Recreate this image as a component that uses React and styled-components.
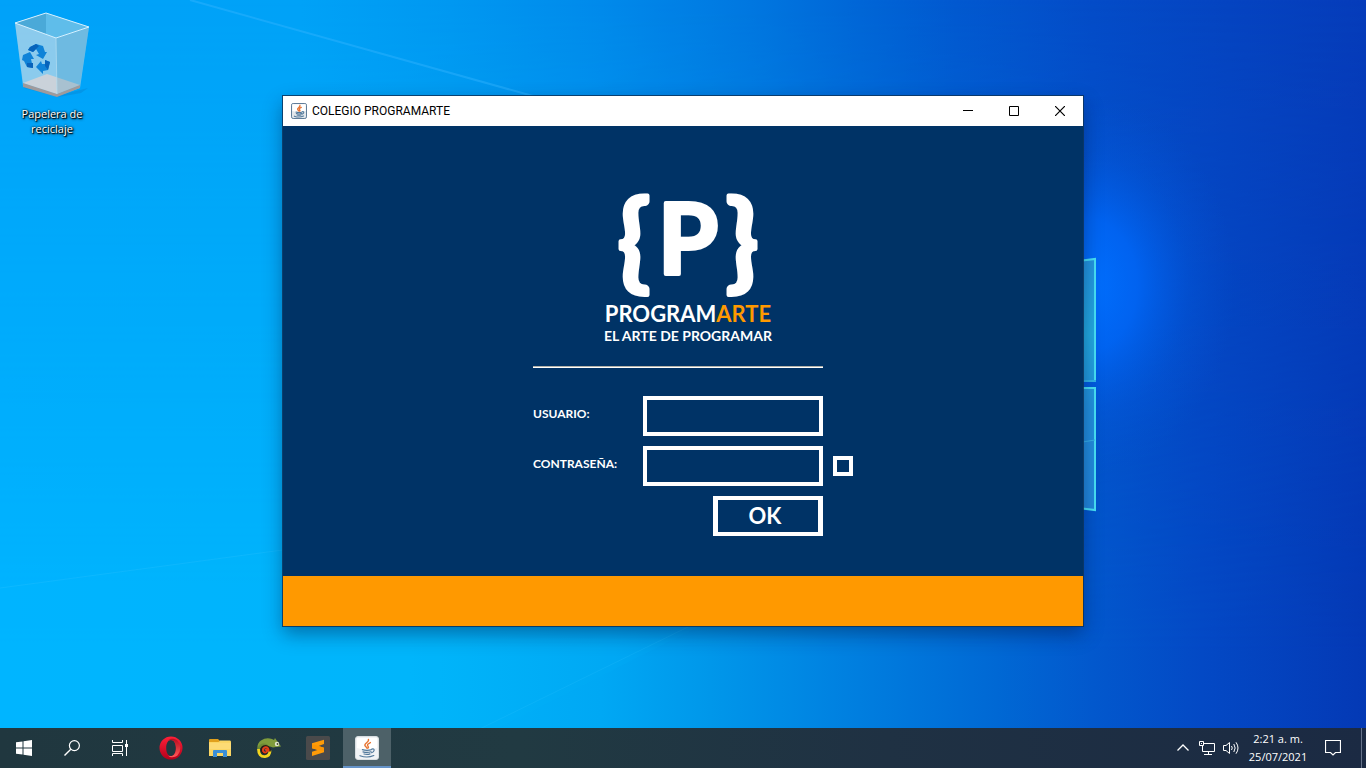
import React from 'react';
import styled, { createGlobalStyle } from 'styled-components';

const GlobalStyle = createGlobalStyle`
  *, *::before, *::after { box-sizing: border-box; }
  body { margin: 0; }
  button, input { font: inherit; color: inherit; margin: 0; }
  svg { display: block; flex: none; }
`;

const navy = '#003366';
const orange = '#ff9900';
const systemFont = '"Open Sans", "Noto Sans", sans-serif';
const titleFont = 'Roboto, "Open Sans", sans-serif';
const brandFont = 'Lato, "Open Sans", sans-serif';

const Screen = styled.div`
  position: relative;
  display: flex;
  flex-direction: column;
  min-height: 100vh;
  overflow: hidden;
  font-family: ${systemFont};
  font-size: 11px;
  background: #0078e0;
`;

const WallpaperArt = styled.svg`
  position: absolute;
  inset: 0;
  width: 100%;
  height: 100%;
`;

const Desktop = styled.main`
  position: relative;
  flex: 1;
  display: grid;
  place-items: center;
  padding-bottom: 6px;
`;

const Shortcut = styled.button`
  position: absolute;
  top: 10px;
  left: 10px;
  width: 84px;
  padding: 0;
  border: 0;
  background: none;
  color: #fff;
  line-height: 15px;
  text-align: center;
  text-shadow: 1px 1px 1px #000, 0 0 2px #000, 1px 1px 3px #000;
  display: flex;
  flex-direction: column;
  gap: 8px;
`;

const Window = styled.section`
  width: 800px;
  max-width: 100%;
  background: ${navy};
  box-shadow: 0 0 0 1px rgba(12, 52, 92, 0.85), 0 8px 18px rgba(0, 20, 60, 0.42);
`;

const TitleBar = styled.header`
  height: 30px;
  display: flex;
  align-items: center;
  gap: 5px;
  padding-left: 8px;
  background: #fff;
`;

const WindowTitle = styled.h1`
  flex: 1;
  margin: 0;
  font-family: ${titleFont};
  font-size: 12px;
  font-weight: 400;
  color: #000;
`;

const CaptionButtons = styled.div`
  display: flex;
  align-self: stretch;
`;

const CaptionButton = styled.button`
  width: 46px;
  padding: 0;
  border: 0;
  background: none;
  color: #000;
  display: grid;
  place-items: center;
`;

const Body = styled.div`
  display: flex;
  justify-content: center;
  padding: 40px 0 40px 20px;
`;

const Content = styled.div`
  width: 320px;
  font-family: ${brandFont};
  font-weight: 700;
  color: #fff;
`;

const Logo = styled.div`
  width: 310px;
  display: flex;
  flex-direction: column;
  align-items: center;
  white-space: nowrap;
`;

const LogoMark = styled.svg`
  fill: #fff;
  stroke: #fff;
  stroke-width: 4px;
  stroke-linejoin: round;
  text-anchor: middle;
`;

const LogoName = styled.div`
  font-size: 22px;
  line-height: 24px;
`;

const Accent = styled.span`
  color: ${orange};
`;

const LogoTagline = styled.div`
  font-size: 14px;
  line-height: 20px;
`;

const Divider = styled.hr`
  width: 290px;
  height: 2px;
  margin: 20px 0 28px;
  border: 0;
  background: linear-gradient(#b0b0a8 50%, #fff 50%);
`;

const LoginForm = styled.form`
  display: flex;
  flex-direction: column;
  gap: 10px;
`;

const FieldRow = styled.div`
  display: grid;
  grid-template-columns: 110px 180px 20px;
  align-items: center;
`;

const FieldLabel = styled.label`
  font-size: 12px;
  line-height: 16px;
  padding-bottom: 4px;
`;

const TextBox = styled.input`
  width: 180px;
  height: 40px;
  padding: 0 6px;
  border: 4px solid #fff;
  border-radius: 0;
  background: ${navy};
  outline: none;
`;

const ShowPassword = styled.input`
  appearance: none;
  width: 20px;
  height: 20px;
  margin-left: 10px;
  border: 4px solid #fff;
  background: ${navy};
  &:checked { background: ${orange}; }
`;

const SubmitButton = styled.button`
  width: 110px;
  height: 40px;
  margin-left: 180px;
  padding: 0 6px 0 0;
  border: 4px solid #fff;
  border-left-width: 5px;
  border-right-width: 5px;
  background: ${navy};
  font-size: 22px;
  line-height: 30px;
`;

const WindowFooter = styled.footer`
  height: 50px;
  background: ${orange};
`;

const Taskbar = styled.nav`
  position: relative;
  height: 40px;
  display: flex;
  align-items: stretch;
  color: #fff;
  background: linear-gradient(90deg, #20373f 0%, #213a42 38%, #1f3143 65%, #1b2a43 100%);
`;

const TaskGroup = styled.div`
  display: flex;
  gap: ${(p) => p.$gap || 0}px;
  margin-left: ${(p) => p.$offset || 0}px;
`;

const TaskButton = styled.button`
  width: 48px;
  padding: 0;
  border: 0;
  background: ${(p) => (p.$active ? '#4d6168' : 'none')};
  box-shadow: ${(p) => (p.$active ? 'inset 0 -2px 0 #6593c8' : 'none')};
  display: grid;
  place-items: center;
`;

const Tray = styled.div`
  display: flex;
  margin-left: auto;
`;

const TrayButton = styled(TaskButton)`
  width: ${(p) => p.$width}px;
`;

const Clock = styled.button`
  width: 62px;
  margin-left: 4px;
  padding: 0;
  border: 0;
  background: none;
  line-height: 18px;
  text-align: center;
  white-space: nowrap;
`;

const ShowDesktop = styled.button`
  width: 5px;
  margin-left: 4px;
  padding: 0;
  border: 0;
  border-left: 1px solid #66738a;
  background: none;
`;

function Wallpaper() {
  return (
    <WallpaperArt viewBox="0 0 1366 768" preserveAspectRatio="none" aria-hidden="true">
      <defs>
        <linearGradient id="upperSky" x1="0" y1="0" x2="1" y2="0">
          <stop offset="0" stopColor="#00a2f9" />
          <stop offset="0.22" stopColor="#00a2f7" />
          <stop offset="0.33" stopColor="#0098f1" />
          <stop offset="0.44" stopColor="#008aeb" />
          <stop offset="0.55" stopColor="#0077e0" />
          <stop offset="0.62" stopColor="#0068d8" />
          <stop offset="0.7" stopColor="#0259d0" />
          <stop offset="0.8" stopColor="#044cc8" />
          <stop offset="1" stopColor="#063cba" />
        </linearGradient>
        <linearGradient id="lowerSky" x1="0" y1="0" x2="1" y2="0">
          <stop offset="0" stopColor="#00b5ff" />
          <stop offset="0.3" stopColor="#00b5fb" />
          <stop offset="0.44" stopColor="#00a8f4" />
          <stop offset="0.52" stopColor="#0097ea" />
          <stop offset="0.62" stopColor="#0080e0" />
          <stop offset="0.73" stopColor="#0068d4" />
          <stop offset="0.8" stopColor="#0258cd" />
          <stop offset="0.88" stopColor="#0349c5" />
          <stop offset="1" stopColor="#0439b5" />
        </linearGradient>
        <linearGradient id="fade" x1="0" y1="0" x2="0" y2="1">
          <stop offset="0" stopColor="#000" />
          <stop offset="0.85" stopColor="#fff" />
        </linearGradient>
        <mask id="lowerMask">
          <rect width="1366" height="768" fill="url(#fade)" />
        </mask>
        <radialGradient id="glow" gradientUnits="userSpaceOnUse" cx="0" cy="0" r="1" gradientTransform="translate(1085 285) scale(150 190)">
          <stop offset="0" stopColor="#0070ff" />
          <stop offset="0.35" stopColor="#0068fa" stopOpacity="0.8" />
          <stop offset="0.7" stopColor="#025ce4" stopOpacity="0.3" />
          <stop offset="1" stopColor="#0456d8" stopOpacity="0" />
        </radialGradient>
        <linearGradient id="pane" x1="0" y1="0" x2="0" y2="1">
          <stop offset="0" stopColor="#2394e0" />
          <stop offset="0.3" stopColor="#22aae0" />
          <stop offset="0.6" stopColor="#2290de" />
          <stop offset="1" stopColor="#2286dc" />
        </linearGradient>
      </defs>
      <rect width="1366" height="768" fill="url(#upperSky)" />
      <rect width="1366" height="768" fill="url(#lowerSky)" mask="url(#lowerMask)" />
      <path d="M190 0 L540 98" stroke="#34b4ff" strokeWidth="2" opacity="0.45" />
      <path d="M0 588 L290 549 L700 626 L420 768 L0 768Z" fill="#00c0ff" opacity="0.08" />
      <path d="M0 588 L290 549" stroke="#42caff" opacity="0.2" />
      <path d="M690 626 L400 768" stroke="#42caff" opacity="0.15" />
      <rect x="930" y="90" width="310" height="400" fill="url(#glow)" />
      <path d="M1070 262 L1096 259 V381 H1070Z M1070 388 H1096 V510 L1070 507Z" fill="url(#pane)" />
      <path d="M1070 262 L1095 259 V381 M1070 388 H1095 V510 L1070 507" fill="none" stroke="#48e2f6" strokeWidth="2" />
      <path d="M1070 381 H1096" stroke="#30b4ea" strokeWidth="2" />
      <path d="M1070 444 L1095 440" stroke="#38b4ea" />
    </WallpaperArt>
  );
}

function RecycleBinIcon() {
  return (
    <svg width="84" height="88" viewBox="0 0 84 88" aria-hidden="true">
      <path d="M13 74 L46 86 L78 78 L71 83 L48 87 L14 78Z" fill="#0784d2" opacity="0.45" />
      <path d="M5 13 L36 3 L79 17 L70 78 L47 86 L13 76Z" fill="#8bc9ea" opacity="0.8" />
      <path d="M5 13 L36 3 L79 17 L46 28Z" fill="#5fbdea" />
      <path d="M5 13 L36 3 V24Z" fill="#4aa9d8" />
      <path d="M13 73 L37 64 L70 75 L47 84Z" fill="#cfcdd0" />
      <path d="M13 73 L47 84 L70 75 V78 L47 87 L13 77Z" fill="#9f9a9c" />
      <path d="M5 13 L46 28 L47 84 L13 73Z" fill="#c1deed" opacity="0.35" />
      <path d="M46 28 L79 17 L70 75 L47 84Z" fill="#6fafd0" opacity="0.4" />
      <path d="M5 13 L36 3 L79 17 L46 28Z" fill="none" stroke="#d4f0ff" />
      <path d="M46 28 L47 84" stroke="#b8dff2" opacity="0.7" />
      <g fill="#0f83d8">
        <path d="M20 37 L26 34 L33 36 L35 42 L37 42 L33 49 L26 45 L29 44 L26 39 L23 42 L18 40Z" />
        <path d="M13 45 L20 42 L24 49 L21 49 L23 58 L17 57 L14 51 L12 50Z" />
        <path d="M26 57 L31 51 L32 54 L35 54 L35 50 L40 52 L38 60 L33 61 L33 64Z" />
      </g>
      <path d="M20 37 L26 34 L29 36 L26 39 L23 42 L18 40Z M17 53 L23 53 V58 L17 57Z M35 50 L40 52 L38 60 L35 56Z" fill="#0763bb" />
    </svg>
  );
}

function JavaIcon({ size }) {
  const small = size < 20;
  return (
    <svg width={size} height={size} viewBox="0 0 24 24" aria-hidden="true">
      <rect x={small ? 0.75 : 0.5} y={small ? 0.75 : 0.5} width={small ? 22.5 : 23} height={small ? 22.5 : 23} rx="2.5" fill={small ? '#e2e7eb' : '#f1f3f5'} stroke={small ? '#5f7d99' : '#d9dee1'} strokeWidth={small ? 1.5 : 1} />
      <path d="M2 2H22V12Q12 15 2 12Z" fill="#fff" />
      <g fill="none" strokeLinecap="round">
        <path d="M13.4 3.4c1.4 2.8-4.7 3.8-3.4 6.2.4.9 1.5 1.5 1.8 2.4M15.4 6.6c-2.8 1.4-3.8 2.2-2.2 4 .5.7.2 1.2-.4 1.6" stroke="#e87532" strokeWidth={small ? 2 : 1.4} />
        <path d="M7.4 13.6c2.8.9 6.8.8 9.4-.1M8 15.8c2.8.8 5.8.7 8-.1M9 18c2 .6 4.5.5 6-.1M5 19.7c4.3 1.6 10 1.5 13.8-.2M16.8 13c3.3-.8 3 2.7-.2 3.7" stroke="#52799b" strokeWidth={small ? 1.6 : 1.2} />
      </g>
    </svg>
  );
}

const StartIcon = () => (
  <svg width="16" height="16" viewBox="0 0 16 16" fill="#fff" aria-hidden="true">
    <path d="M0 2.3 6.5 1.4V7.5H0ZM7.5 1.2 16 0V7.5H7.5ZM0 8.5H6.5V14.6L0 13.7ZM7.5 8.5H16V16L7.5 14.8Z" />
  </svg>
);

const SearchIcon = () => (
  <svg width="16" height="16" viewBox="0 0 16 16" fill="none" stroke="#fff" aria-hidden="true">
    <circle cx="10.4" cy="5.6" r="5" strokeWidth="1.2" />
    <path d="M6.8 9.2 0.5 15.5" strokeWidth="1.4" />
  </svg>
);

const TaskViewIcon = () => (
  <svg width="16" height="16" viewBox="0 0 16 16" fill="none" stroke="#fff" aria-hidden="true">
    <path d="M.5 0V2.5H10.5V0M.5 5.5H10.5V11.5H.5ZM.5 16V13.5H10.5V16M14.5 0V16" />
    <path d="M13 4H16V7H13Z" fill="#fff" stroke="none" />
  </svg>
);

const OperaIcon = () => (
  <svg width="24" height="24" viewBox="0 0 24 24" aria-hidden="true">
    <defs>
      <linearGradient id="operaRing" x1="0" y1="0" x2="0" y2="1">
        <stop offset="0" stopColor="#ff2038" />
        <stop offset="1" stopColor="#b5001b" />
      </linearGradient>
      <linearGradient id="operaSide" x1="0" y1="0" x2="0" y2="1">
        <stop offset="0" stopColor="#b80e20" />
        <stop offset="1" stopColor="#ff5a58" />
      </linearGradient>
    </defs>
    <path fillRule="evenodd" fill="url(#operaRing)" d="M12 .5a11.5 11.5 0 1 0 0 23a11.5 11.5 0 0 0 0-23ZM12 4c3 0 4.8 3.5 4.8 8s-1.8 8-4.8 8s-4.8-3.5-4.8-8s1.8-8 4.8-8Z" />
    <path fill="url(#operaSide)" d="M9 4.6c2-2.3 6-2.6 9.4-.2a11.3 11.3 0 0 1 0 15.2c-3.4 2.4-7.4 2.1-9.4-.2c5 2.2 8-1.6 8-7.4s-3-9.6-8-7.4Z" />
  </svg>
);

const FolderIcon = () => (
  <svg width="22" height="18" viewBox="0 0 22 18" aria-hidden="true">
    <path d="M0 1Q0 0 1 0H9L10.5 1.5V4H0Z" fill="#e1a01d" />
    <path d="M0 3H9.5L11 1.5H21Q22 1.5 22 3V17H0Z" fill="#fbd664" />
    <path d="M0 4H22V10H0Z" fill="#ffe083" opacity="0.55" />
    <path d="M4 18V12Q4 11 5 11H17Q18 11 18 12V18H14V14H8V18Z" fill="#3b8fd8" />
  </svg>
);

const ChameleonIcon = () => (
  <svg width="24" height="22" viewBox="0 0 24 22" aria-hidden="true">
    <path d="M1 14Q-1 7 4 3.5Q9 0 15 2L17 3 18 1 20 4 21 5 24 9.5 19 10 16 10.5 13 9.5 11 10Q5 6 1 14Z" fill="#7f9c3c" />
    <path d="M1.5 12Q4 6 10 8.5" fill="none" stroke="#6c8a34" strokeWidth="2.5" />
    <path d="M1.5 12Q1.5 20 8 19.7Q13 19 13 13.5" fill="none" stroke="#f3d51e" strokeWidth="2.8" />
    <path d="M13 14.5Q13 9 8.5 8.8Q4 9 4.5 13.5Q6 17.5 10 16" fill="none" stroke="#2b1a12" strokeWidth="1.6" />
    <path d="M11.5 14.5Q12 10.2 8.5 10.2Q5.5 11 6 14Q8 17 10 14.5Q10 12 8 13" fill="none" stroke="#e63c16" strokeWidth="1.9" />
    <circle cx="20" cy="7" r="2.2" fill="#e3e9d2" />
    <circle cx="20.5" cy="7" r="0.9" fill="#47512f" />
  </svg>
);

const SublimeIcon = () => (
  <svg width="24" height="24" viewBox="0 0 24 24" aria-hidden="true">
    <rect width="24" height="24" rx="1.5" fill="#4a4a4b" />
    <path d="M6 7.3 18 3.8V8L12.5 10 18 11.7V16.2L6 20V15.8L11.5 14 6 12.2Z" fill="#ff9b08" />
    <path d="M6 8 18 11.7V15L6 12.2Z" fill="#fb9404" />
  </svg>
);

const ChevronIcon = () => (
  <svg width="12" height="12" viewBox="0 0 12 12" fill="none" stroke="#fff" strokeWidth="1.3" aria-hidden="true">
    <path d="M.5 8.5 6 3 11.5 8.5" />
  </svg>
);

const NetworkIcon = () => (
  <svg width="16" height="16" viewBox="0 0 16 16" fill="none" stroke="#fff" aria-hidden="true">
    <path d="M5 3.5H15.5V11.5H3.5V6M9.5 11.5V14M5 14.5H13M.5 1.5H4.5V5.5H.5Z" />
    <path d="M2 3.5H3" />
  </svg>
);

const SpeakerIcon = () => (
  <svg width="17" height="16" viewBox="0 0 17 16" fill="none" stroke="#fff" aria-hidden="true">
    <path d="M.5 5.5H3L6.5 2.5V13.5L3 10.5H.5Z" />
    <path d="M8.5 6Q10 8 8.5 10M10.8 4Q13.5 8 10.8 12M13 2.3Q17 8 13 13.7" />
  </svg>
);

const NotificationsIcon = () => (
  <svg width="16" height="16" viewBox="0 0 16 16" fill="none" stroke="#fff" strokeWidth="1.2" aria-hidden="true">
    <path d="M.5 .5H15.5V12.5H10.5L8 15 5.5 12.5H.5Z" />
  </svg>
);

const MinimizeIcon = () => (
  <svg width="10" height="10" viewBox="0 0 10 10" stroke="#000" aria-hidden="true"><path d="M0 4.5H10" /></svg>
);

const MaximizeIcon = () => (
  <svg width="10" height="10" viewBox="0 0 10 10" fill="none" stroke="#000" aria-hidden="true"><path d="M.5 .5H9.5V9.5H.5Z" /></svg>
);

const CloseIcon = () => (
  <svg width="10" height="10" viewBox="0 0 10 10" stroke="#000" strokeWidth="1.2" aria-hidden="true"><path d="M0 0 10 10M10 0 0 10" /></svg>
);

const systemButtons = [
  ['Inicio', StartIcon],
  ['Buscar', SearchIcon],
  ['Vista de tareas', TaskViewIcon],
];

const apps = [
  ['Opera', OperaIcon],
  ['Explorador de archivos', FolderIcon],
  ['Editor', ChameleonIcon],
  ['Sublime Text', SublimeIcon],
];

function LoginWindow() {
  return (
    <Window aria-label="Colegio Programarte">
      <TitleBar>
        <JavaIcon size={16} />
        <WindowTitle>COLEGIO PROGRAMARTE</WindowTitle>
        <CaptionButtons>
          <CaptionButton aria-label="Minimizar"><MinimizeIcon /></CaptionButton>
          <CaptionButton aria-label="Maximizar"><MaximizeIcon /></CaptionButton>
          <CaptionButton aria-label="Cerrar"><CloseIcon /></CaptionButton>
        </CaptionButtons>
      </TitleBar>
      <Body>
        <Content>
          <Logo>
            <LogoMark width="180" height="136" viewBox="0 0 180 136">
              <text x="36" y="112" fontSize="108">{'{'}</text>
              <text x="90" y="108" fontSize="97">P</text>
              <text x="144" y="112" fontSize="108">{'}'}</text>
            </LogoMark>
            <LogoName>PROGRAM<Accent>ARTE</Accent></LogoName>
            <LogoTagline>EL ARTE DE PROGRAMAR</LogoTagline>
          </Logo>
          <Divider />
          <LoginForm onSubmit={(e) => e.preventDefault()}>
            <FieldRow>
              <FieldLabel htmlFor="user">USUARIO:</FieldLabel>
              <TextBox id="user" type="text" />
            </FieldRow>
            <FieldRow>
              <FieldLabel htmlFor="password">CONTRASEÑA:</FieldLabel>
              <TextBox id="password" type="password" />
              <ShowPassword type="checkbox" aria-label="Mostrar contraseña" />
            </FieldRow>
            <SubmitButton type="submit">OK</SubmitButton>
          </LoginForm>
        </Content>
      </Body>
      <WindowFooter />
    </Window>
  );
}

export default function App() {
  return (
    <Screen>
      <GlobalStyle />
      <Wallpaper />
      <Desktop>
        <Shortcut>
          <RecycleBinIcon />
          <span>Papelera de<br />reciclaje</span>
        </Shortcut>
        <LoginWindow />
      </Desktop>
      <Taskbar aria-label="Barra de tareas">
        <TaskGroup>
          {systemButtons.map(([name, Icon]) => (
            <TaskButton key={name} aria-label={name}><Icon /></TaskButton>
          ))}
        </TaskGroup>
        <TaskGroup $gap={1} $offset={3}>
          {apps.map(([name, Icon]) => (
            <TaskButton key={name} aria-label={name}><Icon /></TaskButton>
          ))}
          <TaskButton $active aria-label="Colegio Programarte"><JavaIcon size={24} /></TaskButton>
        </TaskGroup>
        <Tray>
          <TrayButton $width={24} aria-label="Mostrar iconos ocultos"><ChevronIcon /></TrayButton>
          <TrayButton $width={24} aria-label="Red"><NetworkIcon /></TrayButton>
          <TrayButton $width={24} aria-label="Volumen"><SpeakerIcon /></TrayButton>
          <Clock>2:21 a. m.<br />25/07/2021</Clock>
          <TrayButton $width={48} aria-label="Notificaciones"><NotificationsIcon /></TrayButton>
          <ShowDesktop aria-label="Mostrar escritorio" />
        </Tray>
      </Taskbar>
    </Screen>
  );
}
